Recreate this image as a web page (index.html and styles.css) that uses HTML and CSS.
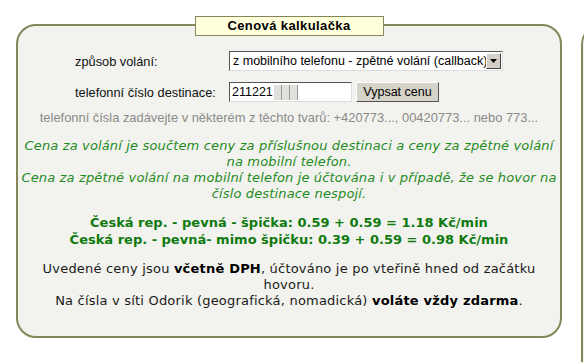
FILE: index.html
```html
<!DOCTYPE html>
<html lang="cs">
<head>
<meta charset="utf-8">
<title>Cenová kalkulačka</title>
<link rel="stylesheet" href="styles.css">
</head>
<body>
<div class="page">
  <section class="panel">
    <h2 class="panel-title">Cenová kalkulačka</h2>
    <form class="calc-form">
      <label class="form-label" for="mode">způsob volání:</label>
      <div class="select-wrap">
        <select id="mode" class="select">
          <option>z mobilního telefonu - zpětné volání (callback)</option>
        </select>
        <span class="select-btn"><svg width="7" height="4" viewBox="0 0 7 4"><path d="M0 0H7L3.5 4Z" fill="#000"/></svg></span>
      </div>
      <label class="form-label" for="num">telefonní číslo destinace:</label>
      <div class="num-row">
        <div class="num-input" id="num">211221<span class="blur"><i></i><i></i><i></i></span></div>
        <button type="button" class="btn">Vypsat cenu</button>
      </div>
    </form>
    <p class="hint">telefonní čísla zadávejte v některém z těchto tvarů: +420773..., 00420773... nebo 773...</p>
    <p class="note">Cena za volání je součtem ceny za příslušnou destinaci a ceny za zpětné volání na mobilní telefon.<br>Cena za zpětné volání na mobilní telefon je účtována i v případě, že se hovor na číslo destinace nespojí.</p>
    <p class="prices">Česká rep. - pevná - špička: 0.59 + 0.59 = 1.18 Kč/min<br>Česká rep. - pevná- mimo špičku: 0.39 + 0.59 = 0.98 Kč/min</p>
    <p class="info">Uvedené ceny jsou <b>včetně DPH</b>, účtováno je po vteřině hned od začátku hovoru.<br>Na čísla v síti Odorik (geografická, nomadická) <b>voláte vždy zdarma</b>.</p>
  </section>
  <section class="panel panel-side"></section>
</div>
</body>
</html>
```
FILE: styles.css
```css
html, body {
  margin: 0;
  padding: 0;
  background: #fff;
  overflow: hidden;
}
.page {
  display: flex;
  gap: 19px;
  box-sizing: border-box;
  width: 584px;
  height: 362px;
  overflow: hidden;
  padding: 24px 0 0 16px;
  font-family: "DejaVu Sans", Verdana, sans-serif;
}
.panel {
  flex: none;
  width: 542px;
  height: 310px;
  border: 2px solid #85875a;
  border-radius: 20px;
  background: #f2f3ee;
  display: flex;
  flex-direction: column;
  align-items: center;
}
.panel-side {
  height: 400px;
  width: 200px;
}
.panel-title {
  margin: -10px 0 0;
  width: 187px;
  height: 18px;
  box-sizing: content-box;
  border: 1px solid #85875a;
  background: #ffffdc;
  text-align: center;
  font: bold 13px/18px "Liberation Sans", Arial, sans-serif;
  letter-spacing: 0.4px;
  color: #000;
}
.calc-form {
  align-self: flex-start;
  margin: 15px 0 0 57px;
  display: grid;
  grid-template-columns: 154px auto;
  row-gap: 11px;
  align-items: center;
  font: 12px "Liberation Sans", Arial, sans-serif;
}
.form-label {
  color: #111;
  font-size: 12.8px;
}
.select-wrap {
  position: relative;
  width: 274px;
  height: 20px;
}
.select {
  appearance: none;
  -webkit-appearance: none;
  box-sizing: border-box;
  width: 100%;
  height: 20px;
  margin: 0;
  padding: 0 0 0 3px;
  border: 1px solid;
  border-color: #555 #ddd #ddd #555;
  border-radius: 0;
  background: #fff;
  font: 12.5px "Liberation Sans", Arial, sans-serif;
  color: #000;
}
.select-btn {
  position: absolute;
  right: 2px;
  top: 2px;
  width: 15px;
  height: 16px;
  box-sizing: border-box;
  background: #d4d0c8;
  border: 1px solid;
  border-color: #fff #404040 #404040 #fff;
  display: flex;
  align-items: center;
  justify-content: center;
}
.select-btn svg { display: block; }
.num-row {
  display: flex;
  gap: 4px;
  align-items: center;
}
.num-input {
  box-sizing: border-box;
  width: 123px;
  height: 20px;
  padding: 2px 0 0 2px;
  border: 1px solid;
  border-color: #555 #ddd #ddd #555;
  background: #fff;
  font: 12.5px/15px "Liberation Sans", Arial, sans-serif;
  color: #000;
  display: flex;
  align-items: flex-start;
}
.blur {
  display: inline-flex;
  height: 15px;
  margin-left: 1px;
}
.blur i {
  display: block;
  width: 7px;
  height: 15px;
  background: #e0e0dc;
  border-right: 1px solid #999;
}
.btn {
  box-sizing: border-box;
  width: 83px;
  height: 20px;
  margin: 0;
  padding: 0;
  border: 1px solid;
  border-color: #fff #555 #555 #fff;
  background: #d6d3ca;
  font: 12.5px "Liberation Sans", Arial, sans-serif;
  color: #000;
}
.hint {
  margin: 8px 0 0;
  font: 12.9px/16px "Liberation Sans", Arial, sans-serif;
  color: #8a8a8a;
  text-align: center;
}
.note {
  margin: 12px 0 0;
  font-style: italic;
  font-size: 13px;
  letter-spacing: 0.15px;
  line-height: 16px;
  color: #1f8a1f;
  text-align: center;
}
.prices {
  margin: 12px 0 0;
  font-weight: bold;
  font-size: 13px;
  line-height: 17px;
  color: #0f7a0f;
  text-align: center;
}
.info {
  margin: 13px 10px 0;
  font-size: 13px;
  letter-spacing: 0.2px;
  line-height: 16px;
  color: #1a1a1a;
  text-align: center;
}
.info b { color: #000; }
```
